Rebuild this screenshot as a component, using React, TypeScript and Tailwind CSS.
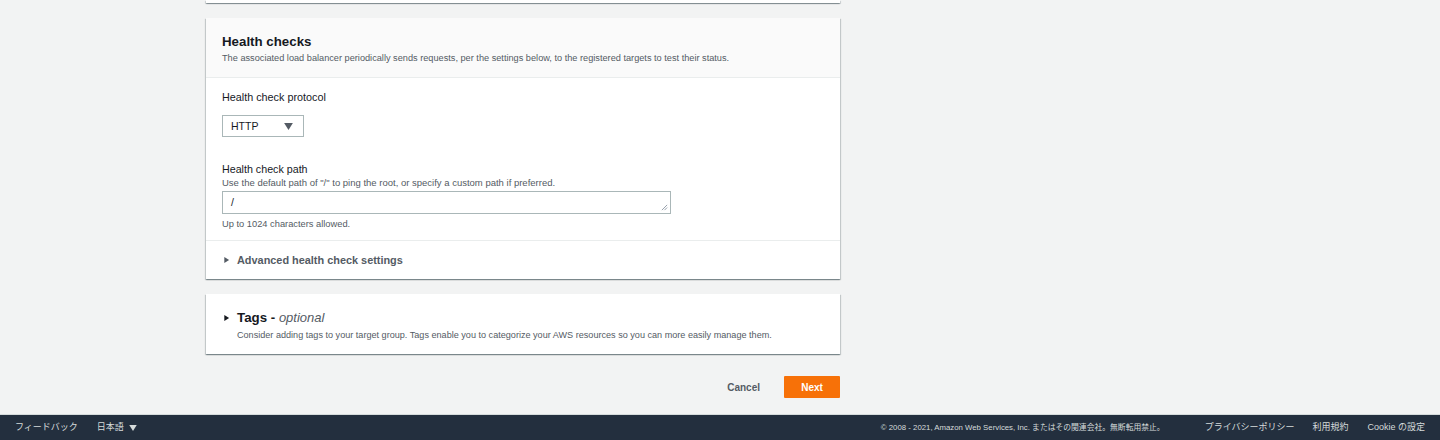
import React from "react";

const font = { fontFamily: '"Liberation Sans", Arial, "Noto Sans CJK JP", sans-serif' };

function Card({ children, className = "" }: { children?: React.ReactNode; className?: string }) {
  return (
    <div
      className={
        "bg-white shadow-[0_1px_1px_0_rgba(0,28,36,0.3),1px_1px_1px_0_rgba(0,28,36,0.15),-1px_1px_1px_0_rgba(0,28,36,0.15)] " +
        className
      }
    >
      {children}
    </div>
  );
}

function Caret({ className = "" }: { className?: string }) {
  return (
    <svg viewBox="0 0 8 8" className={className} fill="currentColor">
      <path d="M1.5 0.5 L7 4 L1.5 7.5 Z" />
    </svg>
  );
}

export default function App() {
  return (
    <div className="min-h-[440px] w-[1440px] bg-[#f2f3f3] flex flex-col text-[#16191f]" style={font}>
      <div className="ml-[206px] w-[634px] flex flex-col">
        <Card className="h-[3px]" />

        <Card className="mt-[15px]">
          <div className="h-[60px] bg-[#fafafa] border-b border-[#eaeded] px-4 flex flex-col justify-center">
            <div className="text-[13.3px] font-bold leading-[16px] mt-[2px]">Health checks</div>
            <div className="text-[9.2px] leading-[12px] text-[#545b64] mt-[2px]">
              The associated load balancer periodically sends requests, per the settings below, to the registered targets to test their status.
            </div>
          </div>
          <div className="px-4 pt-[12px] pb-[10px] border-b border-[#eaeded]">
            <div className="text-[10.8px] leading-[14px]">Health check protocol</div>
            <div className="mt-[11px] w-[82px] h-[22px] border border-[#aab7b8] flex items-center justify-between pl-[8px] pr-[10px] bg-white">
              <span className="text-[10.5px] leading-[14px]">HTTP</span>
              <svg viewBox="0 0 10 8" className="w-[9px] h-[7px] text-[#545b64]" fill="currentColor">
                <path d="M0 0 H10 L5 8 Z" />
              </svg>
            </div>
            <div className="mt-[25px] text-[10.7px] leading-[15px] font-medium">Health check path</div>
            <div className="text-[9.5px] leading-[12px] text-[#545b64]">
              Use the default path of "/" to ping the root, or specify a custom path if preferred.
            </div>
            <div className="mt-[2px] w-[449px] h-[23px] border border-[#aab7b8] bg-white relative flex items-center pl-[8px]">
              <span className="text-[10.5px]">/</span>
              <svg viewBox="0 0 8 8" className="absolute right-[2px] bottom-[2px] w-[7px] h-[7px] text-[#7d8998]" stroke="currentColor" strokeWidth="0.9">
                <path d="M1 7 L7 1 M4 7 L7 4" />
              </svg>
            </div>
            <div className="mt-[4px] text-[9.3px] leading-[12px] text-[#545b64]">Up to 1024 characters allowed.</div>
          </div>
          <div className="h-[38px] px-4 flex items-center">
            <Caret className="w-[7px] h-[8px] text-[#545b64] ml-[1px]" />
            <span className="ml-[7px] text-[10.9px] font-bold text-[#545b64] leading-[14px]">Advanced health check settings</span>
          </div>
        </Card>

        <Card className="mt-[15px] h-[60px] bg-[#fafafa] px-4 flex flex-col justify-center">
          <div className="flex items-center mt-[2px]">
            <Caret className="w-[7px] h-[8px] text-[#16191f] ml-[1px]" />
            <span className="ml-[7px] text-[13.3px] leading-[16px]">
              <span className="font-bold">Tags - </span>
              <i className="text-[#545b64] text-[13px]">optional</i>
            </span>
          </div>
          <div className="ml-[15px] mt-[3px] text-[9.1px] leading-[12px] text-[#545b64]">
            Consider adding tags to your target group. Tags enable you to categorize your AWS resources so you can more easily manage them.
          </div>
        </Card>

        <div className="mt-[22px] flex justify-end items-center gap-[24px]">
          <span className="text-[10px] font-bold text-[#545b64]">Cancel</span>
          <div className="w-[56px] h-[22px] bg-[#f77108] rounded-[1px] flex items-center justify-center text-[10px] font-bold text-white">
            Next
          </div>
        </div>
      </div>

      <div className="mt-[16px] h-[26px] bg-[#232f3e] border-t border-[#d5dbdb] flex items-center text-[#d5dbdb] text-[9px]">
        <span className="ml-[15px]">フィードバック</span>
        <span className="ml-[19px] flex items-center">
          日本語
          <svg viewBox="0 0 10 8" className="w-[8px] h-[6px] ml-[5px]" fill="currentColor">
            <path d="M0 0 H10 L5 8 Z" />
          </svg>
        </span>
        <span className="ml-auto text-[7.8px]">© 2008 - 2021, Amazon Web Services, Inc. またはその関連会社。無断転用禁止。</span>
        <span className="ml-[40px]">プライバシーポリシー</span>
        <span className="ml-[18px]">利用規約</span>
        <span className="ml-[19px] mr-[15px]">Cookie の設定</span>
      </div>
    </div>
  );
}
